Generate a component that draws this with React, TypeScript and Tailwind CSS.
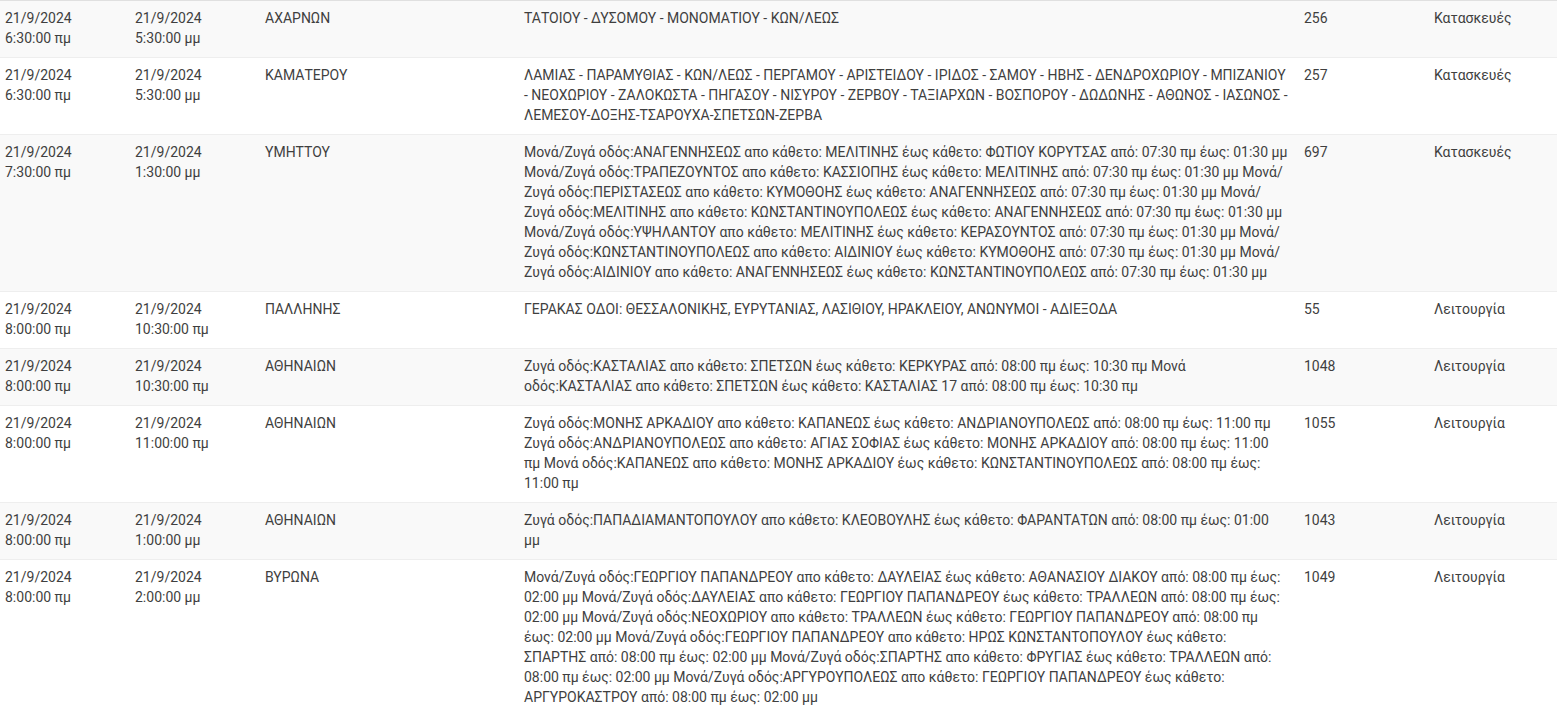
const ROWS = [
  {
    from: ['21/9/2024', '6:30:00 πμ'],
    to: ['21/9/2024', '5:30:00 μμ'],
    area: 'ΑΧΑΡΝΩΝ',
    streets: 'ΤΑΤΟΙΟΥ - ΔΥΣΟΜΟΥ - ΜΟΝΟΜΑΤΙΟΥ - ΚΩΝ/ΛΕΩΣ',
    id: '256',
    type: 'Κατασκευές',
  },
  {
    from: ['21/9/2024', '6:30:00 πμ'],
    to: ['21/9/2024', '5:30:00 μμ'],
    area: 'ΚΑΜΑΤΕΡΟΥ',
    streets:
      'ΛΑΜΙΑΣ - ΠΑΡΑΜΥΘΙΑΣ - ΚΩΝ/ΛΕΩΣ - ΠΕΡΓΑΜΟΥ - ΑΡΙΣΤΕΙΔΟΥ - ΙΡΙΔΟΣ - ΣΑΜΟΥ - ΗΒΗΣ - ΔΕΝΔΡΟΧΩΡΙΟΥ - ΜΠΙΖΑΝΙΟΥ - ΝΕΟΧΩΡΙΟΥ - ΖΑΛΟΚΩΣΤΑ - ΠΗΓΑΣΟΥ - ΝΙΣΥΡΟΥ - ΖΕΡΒΟΥ - ΤΑΞΙΑΡΧΩΝ - ΒΟΣΠΟΡΟΥ - ΔΩΔΩΝΗΣ - ΑΘΩΝΟΣ - ΙΑΣΩΝΟΣ - ΛΕΜΕΣΟΥ-ΔΟΞΗΣ-ΤΣΑΡΟΥΧΑ-ΣΠΕΤΣΩΝ-ΖΕΡΒΑ',
    id: '257',
    type: 'Κατασκευές',
  },
  {
    from: ['21/9/2024', '7:30:00 πμ'],
    to: ['21/9/2024', '1:30:00 μμ'],
    area: 'ΥΜΗΤΤΟΥ',
    streets:
      'Μονά/Ζυγά οδός:ΑΝΑΓΕΝΝΗΣΕΩΣ απο κάθετο: ΜΕΛΙΤΙΝΗΣ έως κάθετο: ΦΩΤΙΟΥ ΚΟΡΥΤΣΑΣ από: 07:30 πμ έως: 01:30 μμ Μονά/Ζυγά οδός:ΤΡΑΠΕΖΟΥΝΤΟΣ απο κάθετο: ΚΑΣΣΙΟΠΗΣ έως κάθετο: ΜΕΛΙΤΙΝΗΣ από: 07:30 πμ έως: 01:30 μμ Μονά/Ζυγά οδός:ΠΕΡΙΣΤΑΣΕΩΣ απο κάθετο: ΚΥΜΟΘΟΗΣ έως κάθετο: ΑΝΑΓΕΝΝΗΣΕΩΣ από: 07:30 πμ έως: 01:30 μμ Μονά/Ζυγά οδός:ΜΕΛΙΤΙΝΗΣ απο κάθετο: ΚΩΝΣΤΑΝΤΙΝΟΥΠΟΛΕΩΣ έως κάθετο: ΑΝΑΓΕΝΝΗΣΕΩΣ από: 07:30 πμ έως: 01:30 μμ Μονά/Ζυγά οδός:ΥΨΗΛΑΝΤΟΥ απο κάθετο: ΜΕΛΙΤΙΝΗΣ έως κάθετο: ΚΕΡΑΣΟΥΝΤΟΣ από: 07:30 πμ έως: 01:30 μμ Μονά/Ζυγά οδός:ΚΩΝΣΤΑΝΤΙΝΟΥΠΟΛΕΩΣ απο κάθετο: ΑΙΔΙΝΙΟΥ έως κάθετο: ΚΥΜΟΘΟΗΣ από: 07:30 πμ έως: 01:30 μμ Μονά/Ζυγά οδός:ΑΙΔΙΝΙΟΥ απο κάθετο: ΑΝΑΓΕΝΝΗΣΕΩΣ έως κάθετο: ΚΩΝΣΤΑΝΤΙΝΟΥΠΟΛΕΩΣ από: 07:30 πμ έως: 01:30 μμ',
    id: '697',
    type: 'Κατασκευές',
  },
  {
    from: ['21/9/2024', '8:00:00 πμ'],
    to: ['21/9/2024', '10:30:00 πμ'],
    area: 'ΠΑΛΛΗΝΗΣ',
    streets: 'ΓΕΡΑΚΑΣ ΟΔΟΙ: ΘΕΣΣΑΛΟΝΙΚΗΣ, ΕΥΡΥΤΑΝΙΑΣ, ΛΑΣΙΘΙΟΥ, ΗΡΑΚΛΕΙΟΥ, ΑΝΩΝΥΜΟΙ - ΑΔΙΕΞΟΔΑ',
    id: '55',
    type: 'Λειτουργία',
  },
  {
    from: ['21/9/2024', '8:00:00 πμ'],
    to: ['21/9/2024', '10:30:00 πμ'],
    area: 'ΑΘΗΝΑΙΩΝ',
    streets:
      'Ζυγά οδός:ΚΑΣΤΑΛΙΑΣ απο κάθετο: ΣΠΕΤΣΩΝ έως κάθετο: ΚΕΡΚΥΡΑΣ από: 08:00 πμ έως: 10:30 πμ Μονά οδός:ΚΑΣΤΑΛΙΑΣ απο κάθετο: ΣΠΕΤΣΩΝ έως κάθετο: ΚΑΣΤΑΛΙΑΣ 17 από: 08:00 πμ έως: 10:30 πμ',
    id: '1048',
    type: 'Λειτουργία',
  },
  {
    from: ['21/9/2024', '8:00:00 πμ'],
    to: ['21/9/2024', '11:00:00 πμ'],
    area: 'ΑΘΗΝΑΙΩΝ',
    streets:
      'Ζυγά οδός:ΜΟΝΗΣ ΑΡΚΑΔΙΟΥ απο κάθετο: ΚΑΠΑΝΕΩΣ έως κάθετο: ΑΝΔΡΙΑΝΟΥΠΟΛΕΩΣ από: 08:00 πμ έως: 11:00 πμ Ζυγά οδός:ΑΝΔΡΙΑΝΟΥΠΟΛΕΩΣ απο κάθετο: ΑΓΙΑΣ ΣΟΦΙΑΣ έως κάθετο: ΜΟΝΗΣ ΑΡΚΑΔΙΟΥ από: 08:00 πμ έως: 11:00 πμ Μονά οδός:ΚΑΠΑΝΕΩΣ απο κάθετο: ΜΟΝΗΣ ΑΡΚΑΔΙΟΥ έως κάθετο: ΚΩΝΣΤΑΝΤΙΝΟΥΠΟΛΕΩΣ από: 08:00 πμ έως: 11:00 πμ',
    id: '1055',
    type: 'Λειτουργία',
  },
  {
    from: ['21/9/2024', '8:00:00 πμ'],
    to: ['21/9/2024', '1:00:00 μμ'],
    area: 'ΑΘΗΝΑΙΩΝ',
    streets: 'Ζυγά οδός:ΠΑΠΑΔΙΑΜΑΝΤΟΠΟΥΛΟΥ απο κάθετο: ΚΛΕΟΒΟΥΛΗΣ έως κάθετο: ΦΑΡΑΝΤΑΤΩΝ από: 08:00 πμ έως: 01:00 μμ',
    id: '1043',
    type: 'Λειτουργία',
  },
  {
    from: ['21/9/2024', '8:00:00 πμ'],
    to: ['21/9/2024', '2:00:00 μμ'],
    area: 'ΒΥΡΩΝΑ',
    streets:
      'Μονά/Ζυγά οδός:ΓΕΩΡΓΙΟΥ ΠΑΠΑΝΔΡΕΟΥ απο κάθετο: ΔΑΥΛΕΙΑΣ έως κάθετο: ΑΘΑΝΑΣΙΟΥ ΔΙΑΚΟΥ από: 08:00 πμ έως: 02:00 μμ Μονά/Ζυγά οδός:ΔΑΥΛΕΙΑΣ απο κάθετο: ΓΕΩΡΓΙΟΥ ΠΑΠΑΝΔΡΕΟΥ έως κάθετο: ΤΡΑΛΛΕΩΝ από: 08:00 πμ έως: 02:00 μμ Μονά/Ζυγά οδός:ΝΕΟΧΩΡΙΟΥ απο κάθετο: ΤΡΑΛΛΕΩΝ έως κάθετο: ΓΕΩΡΓΙΟΥ ΠΑΠΑΝΔΡΕΟΥ από: 08:00 πμ έως: 02:00 μμ Μονά/Ζυγά οδός:ΓΕΩΡΓΙΟΥ ΠΑΠΑΝΔΡΕΟΥ απο κάθετο: ΗΡΩΣ ΚΩΝΣΤΑΝΤΟΠΟΥΛΟΥ έως κάθετο: ΣΠΑΡΤΗΣ από: 08:00 πμ έως: 02:00 μμ Μονά/Ζυγά οδός:ΣΠΑΡΤΗΣ απο κάθετο: ΦΡΥΓΙΑΣ έως κάθετο: ΤΡΑΛΛΕΩΝ από: 08:00 πμ έως: 02:00 μμ Μονά/Ζυγά οδός:ΑΡΓΥΡΟΥΠΟΛΕΩΣ απο κάθετο: ΓΕΩΡΓΙΟΥ ΠΑΠΑΝΔΡΕΟΥ έως κάθετο: ΑΡΓΥΡΟΚΑΣΤΡΟΥ από: 08:00 πμ έως: 02:00 μμ',
    id: '1049',
    type: 'Λειτουργία',
  },
]

export default function App() {
  return (
    <div className="h-screen overflow-hidden bg-white font-['Roboto',sans-serif] text-sm leading-5 text-[#3f3f3f]">
      <table className="w-[1557px] table-fixed border-collapse border-t border-t-[#e0e0e0]">
        <colgroup>
          <col className="w-[130px]" />
          <col className="w-[130px]" />
          <col className="w-[259px]" />
          <col className="w-[780px]" />
          <col className="w-[130px]" />
          <col />
        </colgroup>
        <tbody>
          {ROWS.map((row, i) => (
            <tr key={i} className={`border-b border-b-[#eeeeee] align-top ${i % 2 === 0 ? 'bg-[#f9f9f9]' : 'bg-white'}`}>
              <td className="px-[5px] pb-[9px] pt-[7px]">
                {row.from.map(line => (
                  <div key={line}>{line}</div>
                ))}
              </td>
              <td className="px-[5px] pb-[9px] pt-[7px]">
                {row.to.map(line => (
                  <div key={line}>{line}</div>
                ))}
              </td>
              <td className="px-[5px] pb-[9px] pt-[7px]">{row.area}</td>
              <td className="pb-[9px] pl-[5px] pr-[11px] pt-[7px]">{row.streets}</td>
              <td className="px-[5px] pb-[9px] pt-[7px]">{row.id}</td>
              <td className="px-[5px] pb-[9px] pt-[7px]">{row.type}</td>
            </tr>
          ))}
        </tbody>
      </table>
    </div>
  )
}
